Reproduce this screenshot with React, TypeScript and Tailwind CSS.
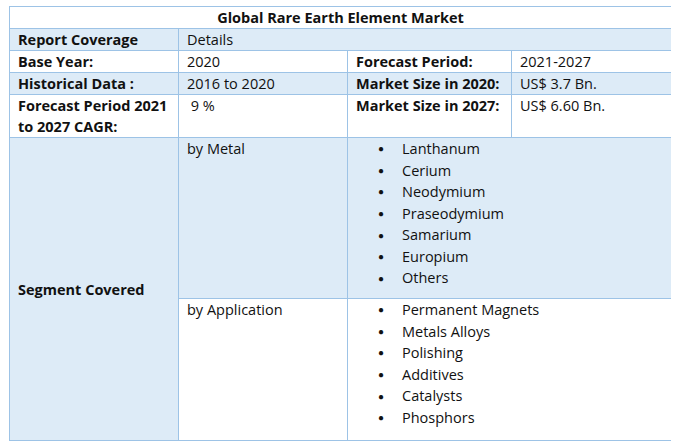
const shade = 'bg-[#ddebf7]';

function Bullets({ items }: { items: string[] }) {
    return (
        <ul className="pt-[0px]">
            {items.map((it) => (
                <li key={it} className="flex items-center h-[21.6px]">
                    <span className="w-[28px] pl-[4px] text-[10px]">●</span>
                    <span>{it}</span>
                </li>
            ))}
        </ul>
    );
}

export default function App() {
    const cell = 'px-[8px] leading-[21px]';
    return (
        <div className="w-[679px] h-[448px] bg-white pt-[6px] pl-[9px] text-[14.5px] text-[#111]" style={{ fontFamily: '"Open Sans", sans-serif' }}>
            <div className="grid w-[662px] gap-px bg-[#9dc3e6] p-px grid-cols-[168px_168px_163px_159px] grid-rows-[21px_21px_21px_21px_42px_160px_141px]">
                <div className="col-span-4 bg-white text-center font-bold leading-[21px]">Global Rare Earth Element Market</div>
                <div className={`${shade} ${cell} font-bold`}>Report Coverage</div>
                <div className={`${shade} ${cell} col-span-3`}>Details</div>
                <div className={`bg-white ${cell} font-bold`}>Base Year:</div>
                <div className={`bg-white ${cell}`}>2020</div>
                <div className={`bg-white ${cell} font-bold`}>Forecast Period:</div>
                <div className={`bg-white ${cell}`}>2021-2027</div>
                <div className={`${shade} ${cell} font-bold`}>Historical Data :</div>
                <div className={`${shade} ${cell}`}>2016 to 2020</div>
                <div className={`${shade} ${cell} font-bold`}>Market Size in 2020:</div>
                <div className={`${shade} ${cell}`}>US$ 3.7 Bn.</div>
                <div className={`bg-white ${cell} font-bold`}>Forecast Period 2021 to 2027 CAGR:</div>
                <div className={`bg-white ${cell}`}>&nbsp;9 %</div>
                <div className={`bg-white ${cell} font-bold`}>Market Size in 2027:</div>
                <div className={`bg-white ${cell}`}>US$ 6.60 Bn.</div>
                <div className={`${shade} ${cell} row-span-2 flex items-center font-bold`}>Segment Covered</div>
                <div className={`${shade} ${cell}`}>by Metal</div>
                <div className={`${shade} col-span-2 pl-[26px]`}>
                    <Bullets items={['Lanthanum', 'Cerium', 'Neodymium', 'Praseodymium', 'Samarium', 'Europium', 'Others']} />
                </div>
                <div className={`bg-white ${cell}`}>by Application</div>
                <div className="bg-white col-span-2 pl-[26px]">
                    <Bullets items={['Permanent Magnets', 'Metals Alloys', 'Polishing', 'Additives', 'Catalysts', 'Phosphors']} />
                </div>
            </div>
        </div>
    );
}
